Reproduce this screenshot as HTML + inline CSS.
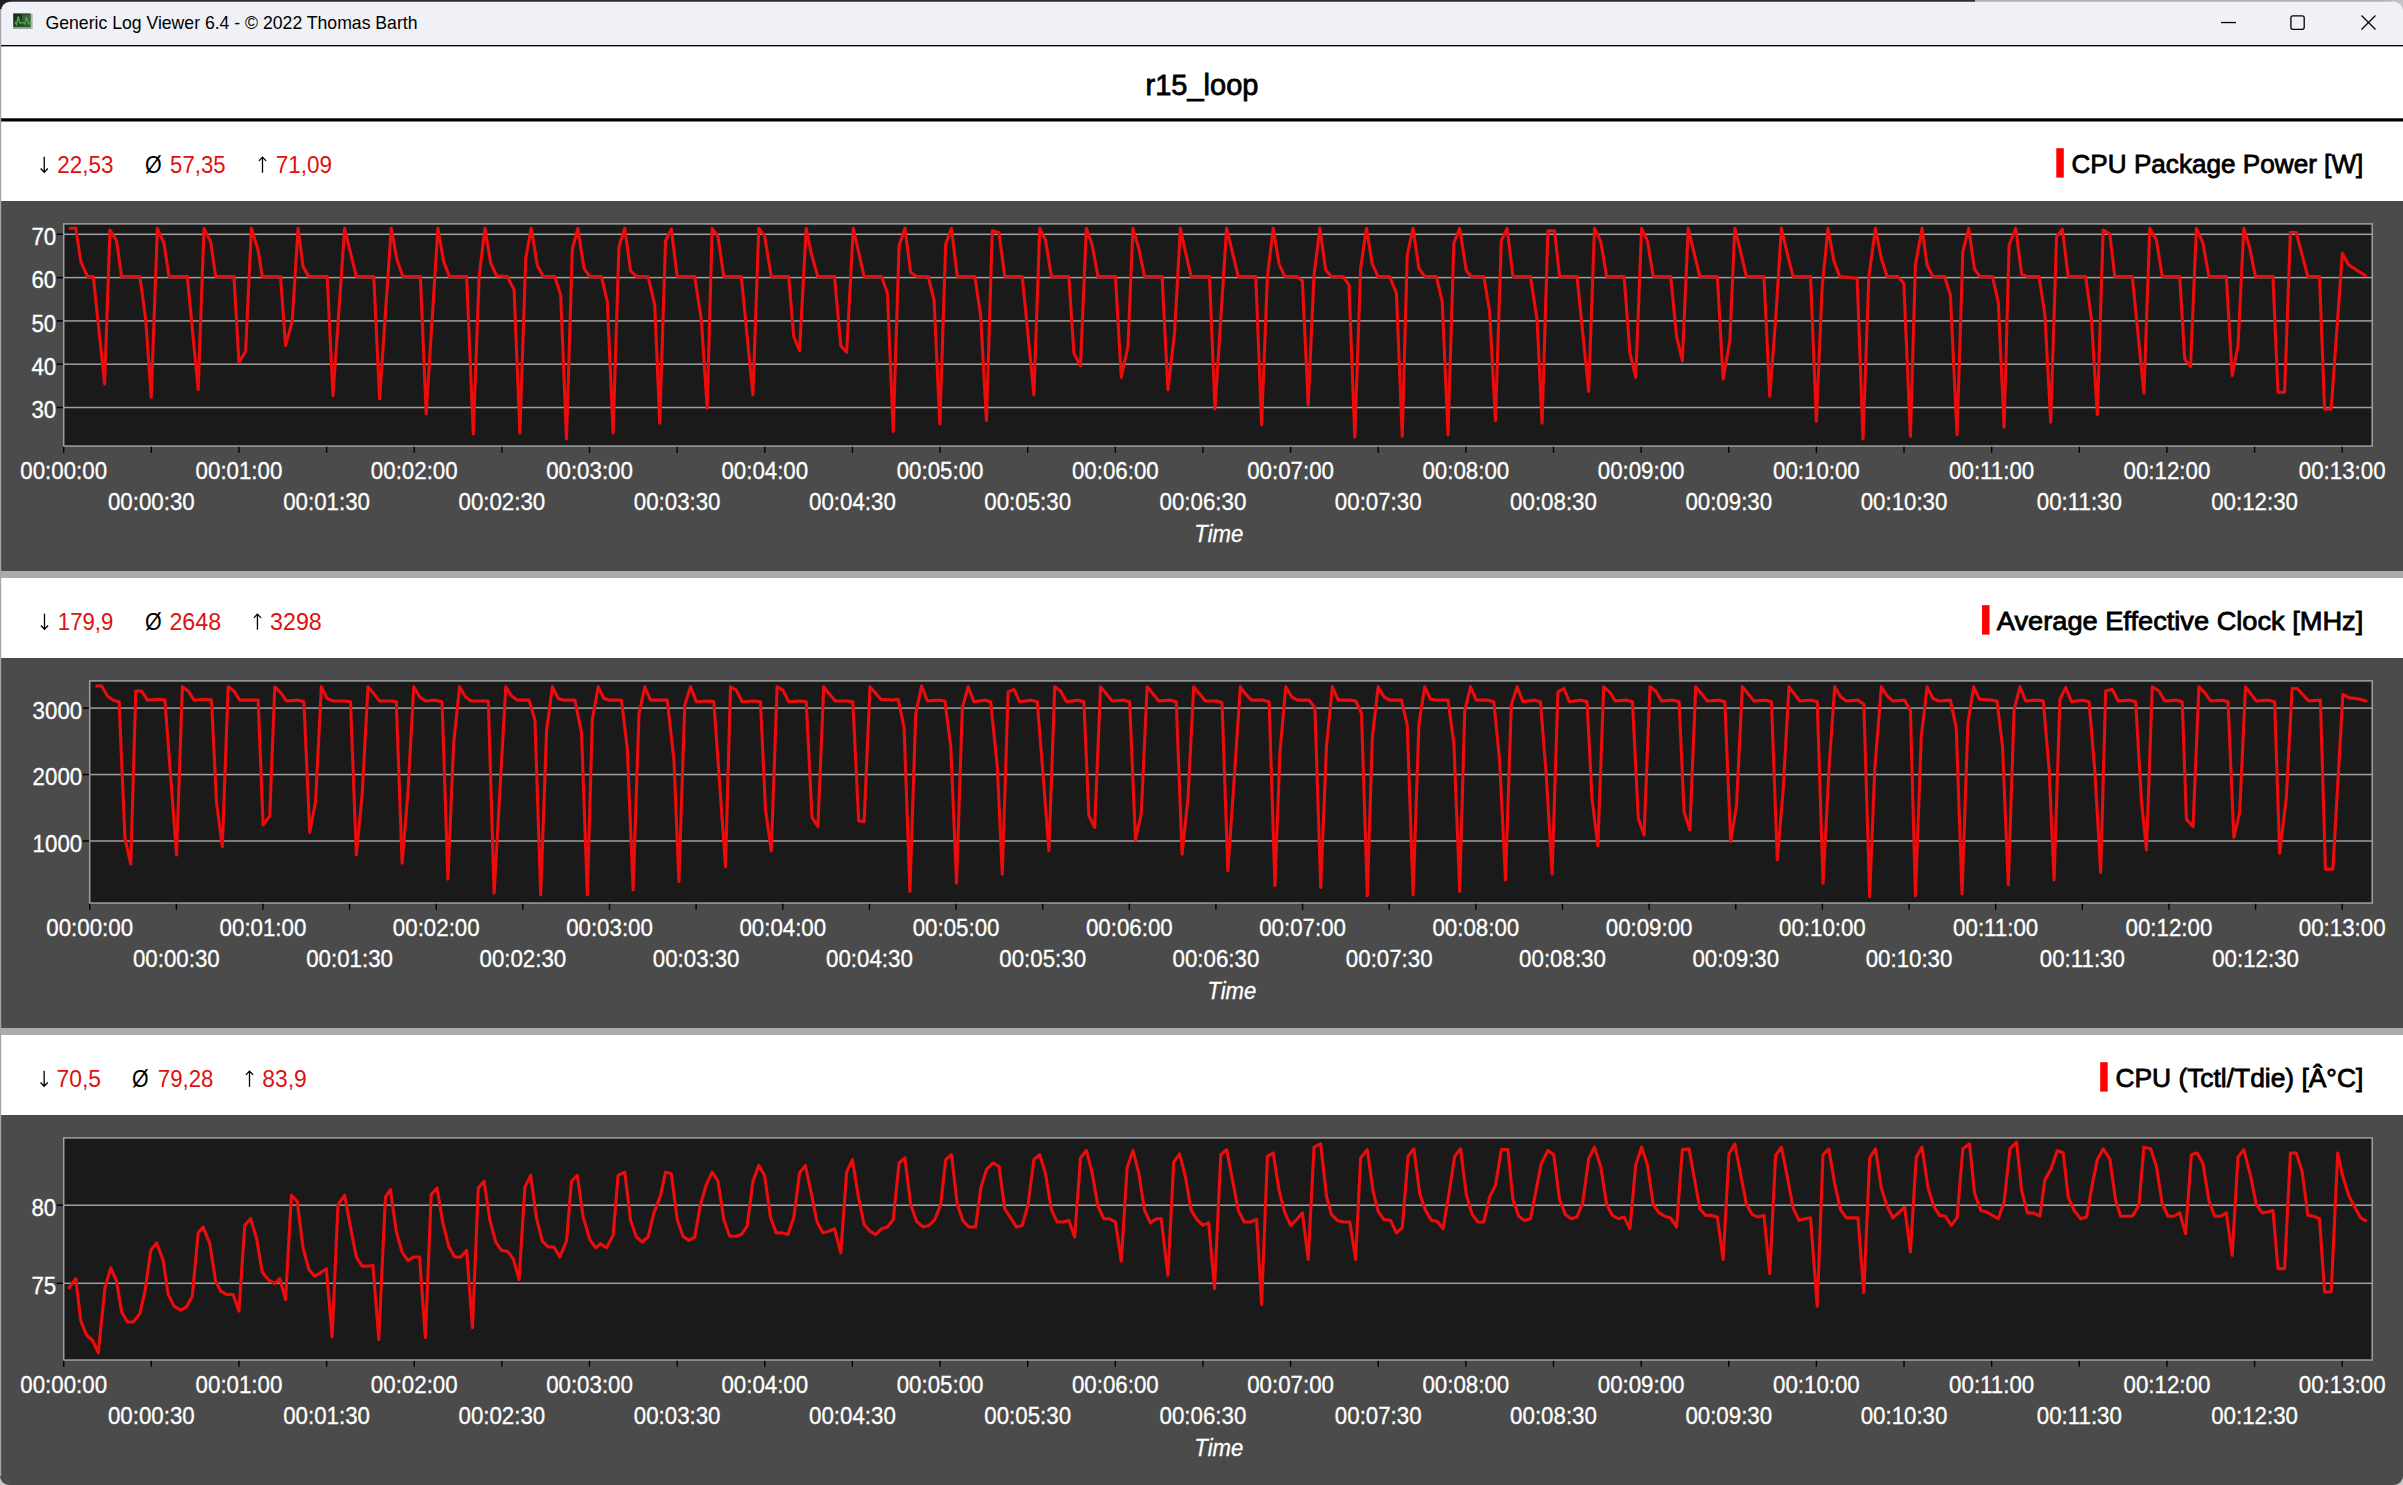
<!DOCTYPE html><html><head><meta charset="utf-8"><style>
html,body{margin:0;padding:0;background:#fff;}
svg{display:block;font-family:"Liberation Sans", sans-serif;}
.ax{font-size:22.3px;fill:#fff;stroke:#fff;stroke-width:0.3px;}
.st{font-size:22.5px;}
.lg{font-size:26px;fill:#000;stroke:#000;stroke-width:0.8px;}
</style></head><body>
<svg width="2403" height="1485" viewBox="0 0 2403 1485">
<rect x="0" y="0" width="2403" height="1485" fill="#fff"/>
<rect x="0" y="0" width="1975" height="2" fill="#2c2c2c"/>
<rect x="1975" y="0" width="428" height="2" fill="#b4b4b6"/>
<rect x="0" y="0" width="12" height="12" fill="#1e1e1e"/>
<rect x="2391" y="0" width="12" height="12" fill="#c4c4c4"/>
<rect x="1" y="1.8" width="2402" height="60" rx="9" fill="#eff1f6"/>
<rect x="1" y="30" width="2402" height="15" fill="#eff1f6"/>
<rect x="0" y="45" width="2403" height="1.6" fill="#000"/>
<rect x="0" y="46.6" width="2403" height="71.6" fill="#fff"/>
<defs><linearGradient id="ig" x1="0" y1="0" x2="1" y2="1"><stop offset="0" stop-color="#142015"/><stop offset="0.5" stop-color="#1f4a22"/><stop offset="1" stop-color="#2a5e2e"/></linearGradient><filter id="bl" x="-20%" y="-20%" width="140%" height="140%"><feGaussianBlur stdDeviation="0.5"/></filter></defs>
<g filter="url(#bl)"><rect x="13.2" y="13.4" width="17.6" height="14" fill="url(#ig)"/><rect x="22" y="14.5" width="8" height="6" fill="#6a7a6a" opacity="0.45"/><rect x="13.2" y="27" width="17.8" height="2" fill="#9a9c9e"/><rect x="30.8" y="14" width="2" height="15" fill="#b8b8bc"/><polyline points="15,22 16.5,24.5 18.3,16.5 19.8,23 23,22.5 25,24 26.5,17 28.5,24 30,22" fill="none" stroke="#4fa653" stroke-width="1.4"/></g>
<text x="45.5" y="29" font-size="18.4px" fill="#000" textLength="372" lengthAdjust="spacingAndGlyphs">Generic Log Viewer 6.4 - © 2022 Thomas Barth</text>
<rect x="2221" y="21.9" width="15" height="1.3" fill="#000"/>
<rect x="2290.9" y="15.8" width="13.3" height="13.5" rx="2" fill="none" stroke="#000" stroke-width="1.3"/>
<path d="M2361.5,15.5 L2375.5,29.5 M2375.5,15.5 L2361.5,29.5" stroke="#000" stroke-width="1.3" fill="none"/>
<text x="1202" y="95" text-anchor="middle" font-size="29px" fill="#000" stroke="#000" stroke-width="0.8">r15_loop</text>
<rect x="0" y="118.3" width="2403" height="3.2" fill="#000"/>
<rect x="0" y="571" width="2403" height="7" fill="#ababab"/>
<rect x="0" y="1028" width="2403" height="7" fill="#ababab"/>
<rect x="0" y="201" width="2403" height="370" fill="#4b4b4b"/>
<rect x="63.70" y="223.90" width="2308.50" height="222.15" fill="#1a1a1a"/>
<rect x="63" y="233.55" width="2309.20" height="1.5" fill="#9f9f9f"/>
<rect x="56.70" y="233.55" width="6.3" height="1.5" fill="#000"/>
<text transform="translate(56.20,245.10) scale(1,1.09)" class="ax" text-anchor="end">70</text>
<rect x="63" y="276.85" width="2309.20" height="1.5" fill="#9f9f9f"/>
<rect x="56.70" y="276.85" width="6.3" height="1.5" fill="#000"/>
<text transform="translate(56.20,288.40) scale(1,1.09)" class="ax" text-anchor="end">60</text>
<rect x="63" y="320.15" width="2309.20" height="1.5" fill="#9f9f9f"/>
<rect x="56.70" y="320.15" width="6.3" height="1.5" fill="#000"/>
<text transform="translate(56.20,331.70) scale(1,1.09)" class="ax" text-anchor="end">50</text>
<rect x="63" y="363.45" width="2309.20" height="1.5" fill="#9f9f9f"/>
<rect x="56.70" y="363.45" width="6.3" height="1.5" fill="#000"/>
<text transform="translate(56.20,375.00) scale(1,1.09)" class="ax" text-anchor="end">40</text>
<rect x="63" y="406.75" width="2309.20" height="1.5" fill="#9f9f9f"/>
<rect x="56.70" y="406.75" width="6.3" height="1.5" fill="#000"/>
<text transform="translate(56.20,418.30) scale(1,1.09)" class="ax" text-anchor="end">30</text>
<rect x="63.70" y="223.90" width="2308.50" height="222.15" fill="none" stroke="#9f9f9f" stroke-width="1.5"/>
<rect x="63.00" y="446.80" width="1.4" height="6" fill="#000"/>
<text transform="translate(63.70,478.85) scale(1,1.09)" class="ax" text-anchor="middle">00:00:00</text>
<rect x="150.63" y="446.80" width="1.4" height="6" fill="#000"/>
<text transform="translate(151.33,509.55) scale(1,1.09)" class="ax" text-anchor="middle">00:00:30</text>
<rect x="238.27" y="446.80" width="1.4" height="6" fill="#000"/>
<text transform="translate(238.97,478.85) scale(1,1.09)" class="ax" text-anchor="middle">00:01:00</text>
<rect x="325.90" y="446.80" width="1.4" height="6" fill="#000"/>
<text transform="translate(326.60,509.55) scale(1,1.09)" class="ax" text-anchor="middle">00:01:30</text>
<rect x="413.54" y="446.80" width="1.4" height="6" fill="#000"/>
<text transform="translate(414.24,478.85) scale(1,1.09)" class="ax" text-anchor="middle">00:02:00</text>
<rect x="501.17" y="446.80" width="1.4" height="6" fill="#000"/>
<text transform="translate(501.87,509.55) scale(1,1.09)" class="ax" text-anchor="middle">00:02:30</text>
<rect x="588.81" y="446.80" width="1.4" height="6" fill="#000"/>
<text transform="translate(589.51,478.85) scale(1,1.09)" class="ax" text-anchor="middle">00:03:00</text>
<rect x="676.44" y="446.80" width="1.4" height="6" fill="#000"/>
<text transform="translate(677.14,509.55) scale(1,1.09)" class="ax" text-anchor="middle">00:03:30</text>
<rect x="764.08" y="446.80" width="1.4" height="6" fill="#000"/>
<text transform="translate(764.78,478.85) scale(1,1.09)" class="ax" text-anchor="middle">00:04:00</text>
<rect x="851.71" y="446.80" width="1.4" height="6" fill="#000"/>
<text transform="translate(852.41,509.55) scale(1,1.09)" class="ax" text-anchor="middle">00:04:30</text>
<rect x="939.35" y="446.80" width="1.4" height="6" fill="#000"/>
<text transform="translate(940.05,478.85) scale(1,1.09)" class="ax" text-anchor="middle">00:05:00</text>
<rect x="1026.98" y="446.80" width="1.4" height="6" fill="#000"/>
<text transform="translate(1027.68,509.55) scale(1,1.09)" class="ax" text-anchor="middle">00:05:30</text>
<rect x="1114.62" y="446.80" width="1.4" height="6" fill="#000"/>
<text transform="translate(1115.32,478.85) scale(1,1.09)" class="ax" text-anchor="middle">00:06:00</text>
<rect x="1202.25" y="446.80" width="1.4" height="6" fill="#000"/>
<text transform="translate(1202.95,509.55) scale(1,1.09)" class="ax" text-anchor="middle">00:06:30</text>
<rect x="1289.88" y="446.80" width="1.4" height="6" fill="#000"/>
<text transform="translate(1290.58,478.85) scale(1,1.09)" class="ax" text-anchor="middle">00:07:00</text>
<rect x="1377.52" y="446.80" width="1.4" height="6" fill="#000"/>
<text transform="translate(1378.22,509.55) scale(1,1.09)" class="ax" text-anchor="middle">00:07:30</text>
<rect x="1465.15" y="446.80" width="1.4" height="6" fill="#000"/>
<text transform="translate(1465.85,478.85) scale(1,1.09)" class="ax" text-anchor="middle">00:08:00</text>
<rect x="1552.79" y="446.80" width="1.4" height="6" fill="#000"/>
<text transform="translate(1553.49,509.55) scale(1,1.09)" class="ax" text-anchor="middle">00:08:30</text>
<rect x="1640.42" y="446.80" width="1.4" height="6" fill="#000"/>
<text transform="translate(1641.12,478.85) scale(1,1.09)" class="ax" text-anchor="middle">00:09:00</text>
<rect x="1728.06" y="446.80" width="1.4" height="6" fill="#000"/>
<text transform="translate(1728.76,509.55) scale(1,1.09)" class="ax" text-anchor="middle">00:09:30</text>
<rect x="1815.69" y="446.80" width="1.4" height="6" fill="#000"/>
<text transform="translate(1816.39,478.85) scale(1,1.09)" class="ax" text-anchor="middle">00:10:00</text>
<rect x="1903.33" y="446.80" width="1.4" height="6" fill="#000"/>
<text transform="translate(1904.03,509.55) scale(1,1.09)" class="ax" text-anchor="middle">00:10:30</text>
<rect x="1990.96" y="446.80" width="1.4" height="6" fill="#000"/>
<text transform="translate(1991.66,478.85) scale(1,1.09)" class="ax" text-anchor="middle">00:11:00</text>
<rect x="2078.60" y="446.80" width="1.4" height="6" fill="#000"/>
<text transform="translate(2079.30,509.55) scale(1,1.09)" class="ax" text-anchor="middle">00:11:30</text>
<rect x="2166.23" y="446.80" width="1.4" height="6" fill="#000"/>
<text transform="translate(2166.93,478.85) scale(1,1.09)" class="ax" text-anchor="middle">00:12:00</text>
<rect x="2253.87" y="446.80" width="1.4" height="6" fill="#000"/>
<text transform="translate(2254.57,509.55) scale(1,1.09)" class="ax" text-anchor="middle">00:12:30</text>
<rect x="2341.50" y="446.80" width="1.4" height="6" fill="#000"/>
<text transform="translate(2342.20,478.85) scale(1,1.09)" class="ax" text-anchor="middle">00:13:00</text>
<text transform="translate(1218.85,541.65) scale(1,1.06)" class="ax" text-anchor="middle" textLength="49.00" lengthAdjust="spacingAndGlyphs" font-style="italic">Time</text>
<clipPath id="c121"><rect x="64.45" y="224.65" width="2307.00" height="220.65"/></clipPath>
<polyline points="69.99,228.32 75.81,228.32 80.81,261.61 87.47,276.60 93.29,276.60 104.61,383.96 109.94,229.99 116.60,240.81 121.59,276.60 139.90,276.60 145.73,319.88 151.22,397.28 157.38,228.32 164.04,243.30 169.03,276.60 187.34,276.60 198.16,389.79 203.99,228.32 210.65,241.64 215.64,276.60 233.95,276.60 238.94,362.32 245.60,351.50 251.43,228.32 258.09,249.96 262.25,276.60 280.56,276.60 285.55,345.68 292.21,321.54 298.04,228.32 303.03,266.61 308.86,276.60 327.17,276.60 332.99,395.61 344.64,228.32 356.30,276.60 373.77,276.60 379.60,398.94 391.25,228.32 397.08,259.95 402.90,276.60 420.38,276.60 426.21,413.92 437.86,228.32 443.69,261.61 449.51,276.60 466.63,276.60 473.29,433.90 479.12,276.60 484.94,228.32 490.77,263.28 496.60,275.76 507.42,276.60 514.07,289.91 519.90,433.07 525.73,258.29 531.22,228.32 537.38,265.78 543.20,276.60 554.86,276.60 560.68,294.91 566.51,438.89 572.33,249.13 577.83,228.32 583.99,268.27 589.81,276.60 601.46,276.60 607.29,301.56 613.12,433.07 618.94,246.63 624.77,228.32 630.60,270.77 636.42,276.60 648.07,276.60 654.73,304.89 659.73,423.08 665.55,240.81 671.38,229.16 677.20,276.60 694.68,276.60 701.34,319.88 707.17,408.10 712.16,228.32 717.99,236.65 723.81,276.60 741.29,276.60 752.94,394.78 758.77,228.32 764.59,235.81 771.25,276.60 788.73,276.60 793.72,336.52 799.55,350.67 806.21,228.32 811.20,253.29 817.86,276.60 834.51,276.60 840.81,345.68 846.63,352.33 853.29,228.32 864.11,276.60 881.59,276.60 887.42,293.24 893.24,431.40 899.07,245.80 904.89,228.32 910.72,272.43 916.55,276.60 928.20,276.60 934.02,299.90 939.85,423.91 945.68,244.14 951.50,228.32 957.33,276.60 974.81,276.60 980.63,314.88 986.46,420.58 992.28,230.82 998.94,232.48 1004.77,276.60 1022.25,276.60 1033.90,394.78 1039.73,228.32 1045.55,239.98 1051.38,276.60 1068.86,276.60 1073.85,353.17 1080.51,365.65 1086.33,228.32 1092.16,244.97 1097.99,276.60 1115.46,276.60 1121.29,377.30 1127.95,346.51 1132.94,228.32 1138.77,248.30 1144.59,276.60 1162.07,276.60 1167.90,389.79 1174.56,333.19 1180.38,228.32 1185.38,251.63 1191.20,276.60 1209.51,276.60 1214.98,408.93 1220.81,318.21 1226.63,228.32 1238.29,276.60 1255.76,276.60 1261.59,424.74 1267.42,276.60 1273.24,228.32 1279.07,264.11 1284.89,276.60 1296.55,276.60 1302.37,280.76 1308.20,404.77 1314.02,274.93 1319.85,228.32 1325.68,269.94 1331.50,276.60 1343.15,276.60 1348.98,284.92 1354.81,437.23 1360.63,268.27 1366.46,228.32 1372.28,264.11 1378.11,276.60 1389.76,276.60 1396.42,293.24 1402.25,436.40 1407.24,254.96 1413.07,228.32 1418.89,268.27 1424.72,276.60 1436.37,276.60 1442.20,301.56 1448.02,434.73 1453.85,243.30 1459.68,228.32 1466.33,270.77 1471.33,276.60 1483.81,276.60 1489.64,311.55 1495.46,420.58 1501.29,240.81 1507.12,228.32 1512.94,276.60 1530.42,276.60 1537.08,319.88 1542.07,423.08 1547.90,230.82 1554.56,230.82 1559.55,276.60 1577.03,276.60 1588.68,391.45 1594.51,228.32 1600.81,241.64 1606.63,276.60 1624.11,276.60 1629.94,353.17 1635.76,377.30 1641.59,228.32 1647.42,240.81 1653.24,276.60 1670.72,276.60 1676.55,336.52 1682.37,360.66 1688.20,228.32 1699.85,276.60 1717.33,276.60 1723.15,378.97 1729.81,341.51 1734.81,228.32 1740.63,251.63 1746.46,276.60 1763.94,276.60 1769.76,396.45 1775.59,319.88 1781.41,228.32 1787.24,253.29 1793.07,276.60 1810.55,276.60 1816.37,421.41 1822.20,286.58 1828.02,228.32 1833.85,260.78 1839.68,276.60 1857.15,278.26 1862.98,438.89 1868.81,277.43 1875.46,228.32 1881.29,258.29 1887.12,276.60 1897.94,276.60 1903.76,283.25 1910.42,436.40 1915.41,264.94 1922.07,228.32 1927.07,264.94 1932.89,276.60 1944.54,276.60 1950.37,294.91 1957.03,434.73 1962.85,251.63 1968.68,228.32 1974.51,269.11 1979.98,276.60 1992.46,276.60 1998.29,302.40 2004.11,427.24 2009.11,244.97 2015.76,228.32 2021.59,274.10 2027.42,276.60 2039.07,276.60 2044.89,314.88 2050.72,422.25 2056.55,236.65 2062.37,229.16 2068.20,276.60 2085.68,276.60 2091.50,319.88 2097.33,414.76 2103.15,229.99 2109.81,234.15 2114.81,276.60 2132.28,276.60 2143.94,393.12 2149.76,228.32 2156.42,239.98 2162.25,276.60 2179.73,276.60 2184.72,358.99 2190.55,366.48 2196.37,228.32 2203.03,243.30 2208.86,276.60 2226.33,276.60 2232.16,375.64 2237.99,346.51 2243.81,228.32 2249.64,247.47 2255.46,276.60 2272.94,276.60 2277.94,392.28 2284.59,392.28 2290.42,232.48 2296.25,232.48 2307.90,276.60 2319.55,276.60 2324.54,408.93 2331.20,408.93 2342.36,253.30 2348.56,264.92 2365.60,275.76" fill="none" stroke="#ec0c0c" stroke-width="3.1" stroke-linejoin="round" stroke-linecap="round" clip-path="url(#c121)"/>
<path d="M44.25,156.70 L44.25,171.70 M40.65,168.50 L44.25,172.30 L47.85,168.50" fill="none" stroke="#000" stroke-width="1.3"/>
<text transform="translate(57.20,172.70) scale(1,1.1)" class="st" textLength="56.20" lengthAdjust="spacingAndGlyphs" fill="#dd1010">22,53</text>
<text transform="translate(144.90,172.70) scale(1,1.1)" class="st" textLength="16.70" lengthAdjust="spacingAndGlyphs" fill="#000">Ø</text>
<text transform="translate(170.10,172.70) scale(1,1.1)" class="st" textLength="55.50" lengthAdjust="spacingAndGlyphs" fill="#dd1010">57,35</text>
<path d="M262.50,172.70 L262.50,157.70 M258.90,160.90 L262.50,157.10 L266.10,160.90" fill="none" stroke="#000" stroke-width="1.3"/>
<text transform="translate(275.80,172.70) scale(1,1.1)" class="st" textLength="56.30" lengthAdjust="spacingAndGlyphs" fill="#dd1010">71,09</text>
<rect x="2056.30" y="148.20" width="7.5" height="29.4" fill="#ff0000"/>
<text x="2071.50" y="172.90" class="lg" textLength="291.80" lengthAdjust="spacingAndGlyphs">CPU Package Power [W]</text>
<rect x="0" y="658" width="2403" height="370" fill="#4b4b4b"/>
<rect x="89.70" y="680.90" width="2282.50" height="222.15" fill="#1a1a1a"/>
<rect x="89" y="707.35" width="2283.20" height="1.5" fill="#9f9f9f"/>
<rect x="82.70" y="707.35" width="6.3" height="1.5" fill="#000"/>
<text transform="translate(82.20,718.90) scale(1,1.09)" class="ax" text-anchor="end">3000</text>
<rect x="89" y="773.80" width="2283.20" height="1.5" fill="#9f9f9f"/>
<rect x="82.70" y="773.80" width="6.3" height="1.5" fill="#000"/>
<text transform="translate(82.20,785.35) scale(1,1.09)" class="ax" text-anchor="end">2000</text>
<rect x="89" y="840.25" width="2283.20" height="1.5" fill="#9f9f9f"/>
<rect x="82.70" y="840.25" width="6.3" height="1.5" fill="#000"/>
<text transform="translate(82.20,851.80) scale(1,1.09)" class="ax" text-anchor="end">1000</text>
<rect x="89.70" y="680.90" width="2282.50" height="222.15" fill="none" stroke="#9f9f9f" stroke-width="1.5"/>
<rect x="89.00" y="903.80" width="1.4" height="6" fill="#000"/>
<text transform="translate(89.70,935.85) scale(1,1.09)" class="ax" text-anchor="middle">00:00:00</text>
<rect x="175.63" y="903.80" width="1.4" height="6" fill="#000"/>
<text transform="translate(176.33,966.55) scale(1,1.09)" class="ax" text-anchor="middle">00:00:30</text>
<rect x="262.27" y="903.80" width="1.4" height="6" fill="#000"/>
<text transform="translate(262.97,935.85) scale(1,1.09)" class="ax" text-anchor="middle">00:01:00</text>
<rect x="348.90" y="903.80" width="1.4" height="6" fill="#000"/>
<text transform="translate(349.60,966.55) scale(1,1.09)" class="ax" text-anchor="middle">00:01:30</text>
<rect x="435.54" y="903.80" width="1.4" height="6" fill="#000"/>
<text transform="translate(436.24,935.85) scale(1,1.09)" class="ax" text-anchor="middle">00:02:00</text>
<rect x="522.17" y="903.80" width="1.4" height="6" fill="#000"/>
<text transform="translate(522.87,966.55) scale(1,1.09)" class="ax" text-anchor="middle">00:02:30</text>
<rect x="608.81" y="903.80" width="1.4" height="6" fill="#000"/>
<text transform="translate(609.51,935.85) scale(1,1.09)" class="ax" text-anchor="middle">00:03:00</text>
<rect x="695.44" y="903.80" width="1.4" height="6" fill="#000"/>
<text transform="translate(696.14,966.55) scale(1,1.09)" class="ax" text-anchor="middle">00:03:30</text>
<rect x="782.08" y="903.80" width="1.4" height="6" fill="#000"/>
<text transform="translate(782.78,935.85) scale(1,1.09)" class="ax" text-anchor="middle">00:04:00</text>
<rect x="868.71" y="903.80" width="1.4" height="6" fill="#000"/>
<text transform="translate(869.41,966.55) scale(1,1.09)" class="ax" text-anchor="middle">00:04:30</text>
<rect x="955.35" y="903.80" width="1.4" height="6" fill="#000"/>
<text transform="translate(956.05,935.85) scale(1,1.09)" class="ax" text-anchor="middle">00:05:00</text>
<rect x="1041.98" y="903.80" width="1.4" height="6" fill="#000"/>
<text transform="translate(1042.68,966.55) scale(1,1.09)" class="ax" text-anchor="middle">00:05:30</text>
<rect x="1128.62" y="903.80" width="1.4" height="6" fill="#000"/>
<text transform="translate(1129.32,935.85) scale(1,1.09)" class="ax" text-anchor="middle">00:06:00</text>
<rect x="1215.25" y="903.80" width="1.4" height="6" fill="#000"/>
<text transform="translate(1215.95,966.55) scale(1,1.09)" class="ax" text-anchor="middle">00:06:30</text>
<rect x="1301.88" y="903.80" width="1.4" height="6" fill="#000"/>
<text transform="translate(1302.58,935.85) scale(1,1.09)" class="ax" text-anchor="middle">00:07:00</text>
<rect x="1388.52" y="903.80" width="1.4" height="6" fill="#000"/>
<text transform="translate(1389.22,966.55) scale(1,1.09)" class="ax" text-anchor="middle">00:07:30</text>
<rect x="1475.15" y="903.80" width="1.4" height="6" fill="#000"/>
<text transform="translate(1475.85,935.85) scale(1,1.09)" class="ax" text-anchor="middle">00:08:00</text>
<rect x="1561.79" y="903.80" width="1.4" height="6" fill="#000"/>
<text transform="translate(1562.49,966.55) scale(1,1.09)" class="ax" text-anchor="middle">00:08:30</text>
<rect x="1648.42" y="903.80" width="1.4" height="6" fill="#000"/>
<text transform="translate(1649.12,935.85) scale(1,1.09)" class="ax" text-anchor="middle">00:09:00</text>
<rect x="1735.06" y="903.80" width="1.4" height="6" fill="#000"/>
<text transform="translate(1735.76,966.55) scale(1,1.09)" class="ax" text-anchor="middle">00:09:30</text>
<rect x="1821.69" y="903.80" width="1.4" height="6" fill="#000"/>
<text transform="translate(1822.39,935.85) scale(1,1.09)" class="ax" text-anchor="middle">00:10:00</text>
<rect x="1908.33" y="903.80" width="1.4" height="6" fill="#000"/>
<text transform="translate(1909.03,966.55) scale(1,1.09)" class="ax" text-anchor="middle">00:10:30</text>
<rect x="1994.96" y="903.80" width="1.4" height="6" fill="#000"/>
<text transform="translate(1995.66,935.85) scale(1,1.09)" class="ax" text-anchor="middle">00:11:00</text>
<rect x="2081.60" y="903.80" width="1.4" height="6" fill="#000"/>
<text transform="translate(2082.30,966.55) scale(1,1.09)" class="ax" text-anchor="middle">00:11:30</text>
<rect x="2168.23" y="903.80" width="1.4" height="6" fill="#000"/>
<text transform="translate(2168.93,935.85) scale(1,1.09)" class="ax" text-anchor="middle">00:12:00</text>
<rect x="2254.87" y="903.80" width="1.4" height="6" fill="#000"/>
<text transform="translate(2255.57,966.55) scale(1,1.09)" class="ax" text-anchor="middle">00:12:30</text>
<rect x="2341.50" y="903.80" width="1.4" height="6" fill="#000"/>
<text transform="translate(2342.20,935.85) scale(1,1.09)" class="ax" text-anchor="middle">00:13:00</text>
<text transform="translate(1231.85,998.65) scale(1,1.06)" class="ax" text-anchor="middle" textLength="49.00" lengthAdjust="spacingAndGlyphs" font-style="italic">Time</text>
<clipPath id="c578"><rect x="90.45" y="681.65" width="2281.00" height="220.65"/></clipPath>
<polyline points="96.65,685.99 101.65,685.99 107.47,695.98 113.30,700.14 119.12,701.80 124.95,838.30 130.78,864.10 135.77,690.98 141.60,690.98 147.42,700.14 159.07,699.30 164.90,700.14 170.73,777.54 176.55,854.94 182.38,686.82 188.20,690.98 194.03,700.14 205.68,699.30 211.51,700.14 216.50,802.51 222.33,846.62 228.15,686.82 233.98,690.98 239.81,700.14 252.29,700.14 258.12,700.14 263.11,824.98 269.77,815.83 274.76,686.82 280.59,692.65 286.41,700.97 298.07,700.14 303.89,701.80 309.72,832.47 315.55,801.68 321.37,686.82 327.20,698.47 333.02,700.97 344.68,700.97 350.50,701.80 356.33,854.94 362.15,795.02 367.98,686.82 372.97,692.65 379.63,700.97 391.28,700.97 396.28,701.80 402.10,863.27 407.93,792.52 413.76,686.82 419.58,696.81 425.41,700.97 435.40,700.14 442.05,701.80 447.88,879.08 453.71,742.58 459.53,686.82 465.36,696.81 471.18,700.97 488.30,700.97 494.13,893.23 505.78,686.82 511.61,695.98 517.43,700.14 529.09,700.14 534.91,720.11 540.74,894.89 546.56,730.93 552.39,686.82 558.22,698.47 564.04,700.14 574.86,700.14 581.52,732.60 587.35,894.89 592.34,719.28 598.17,686.82 603.99,698.47 609.82,700.14 621.47,700.14 627.30,748.41 633.12,889.90 638.95,714.29 644.78,686.82 650.60,700.14 656.43,700.14 667.25,700.14 673.91,759.23 678.90,881.58 684.73,705.13 690.55,686.82 696.38,701.80 708.03,700.97 713.86,701.80 725.51,866.60 730.50,686.82 736.33,690.15 742.15,701.80 753.81,700.97 760.46,701.80 765.46,809.17 771.28,850.78 777.11,686.82 782.94,690.15 788.76,701.80 800.41,700.97 806.24,701.80 812.07,817.49 817.89,826.65 823.72,686.82 829.54,694.31 835.37,700.97 847.02,700.97 852.85,701.80 858.67,820.82 864.14,821.65 869.97,686.82 880.79,699.30 892.44,700.14 898.27,699.30 904.09,727.60 909.92,891.56 915.74,713.45 921.57,685.99 927.40,700.97 939.05,700.14 944.88,700.97 950.70,745.91 956.53,883.24 962.35,707.63 968.18,686.82 974.01,701.80 984.83,700.14 990.65,701.80 997.31,766.72 1002.30,874.09 1008.13,691.81 1013.96,689.32 1019.78,701.80 1031.43,700.14 1037.26,701.80 1043.09,775.04 1048.91,850.78 1054.74,686.82 1060.56,690.98 1066.39,701.80 1078.04,700.14 1083.87,701.80 1088.86,815.83 1094.69,827.48 1100.51,686.82 1112.17,700.97 1123.82,700.14 1129.64,701.80 1135.47,839.96 1141.30,813.33 1147.12,686.82 1158.77,700.97 1170.43,700.14 1176.25,701.80 1182.08,854.11 1187.90,799.18 1193.73,686.82 1205.38,700.97 1217.03,700.97 1222.03,702.63 1227.85,870.76 1234.51,774.21 1240.34,686.82 1245.81,694.31 1251.63,700.14 1263.29,700.14 1269.11,701.80 1274.94,885.74 1279.93,752.57 1285.76,686.82 1291.58,696.81 1297.41,700.14 1309.06,700.14 1314.89,707.63 1320.71,887.40 1326.54,745.91 1332.37,686.82 1338.19,700.14 1349.84,700.14 1355.67,700.97 1361.50,713.45 1367.32,895.73 1372.32,737.59 1378.14,686.82 1383.97,696.81 1389.79,700.14 1401.45,700.14 1407.27,725.11 1413.10,894.89 1418.92,724.27 1424.75,686.82 1430.58,699.30 1436.40,700.14 1448.05,700.14 1453.88,743.42 1459.71,891.56 1464.70,710.96 1470.53,686.82 1476.35,700.14 1488.00,700.14 1493.83,701.80 1499.66,760.89 1505.48,879.91 1511.31,705.13 1517.13,686.82 1522.96,701.80 1534.61,700.14 1540.44,701.80 1546.27,775.04 1552.09,874.09 1557.92,691.81 1563.74,688.48 1569.57,701.80 1581.22,700.14 1587.05,701.80 1592.04,799.18 1597.87,845.79 1603.69,686.82 1609.52,691.81 1615.35,700.97 1626.64,700.14 1632.47,701.80 1638.29,818.32 1644.12,834.97 1649.94,686.82 1655.77,690.98 1661.60,700.97 1673.25,700.14 1679.07,701.80 1684.07,811.66 1689.89,829.97 1695.72,686.82 1707.37,700.97 1719.02,700.14 1724.85,701.80 1730.68,841.63 1736.50,805.84 1742.33,686.82 1753.98,700.97 1765.63,700.14 1771.46,701.80 1777.28,859.94 1783.11,790.86 1788.94,686.82 1799.76,700.97 1811.41,700.14 1817.23,701.80 1823.06,883.24 1828.89,770.88 1834.71,686.82 1840.54,696.81 1846.36,700.97 1858.02,700.14 1863.84,704.30 1869.67,896.56 1874.66,770.88 1881.32,686.82 1887.15,695.98 1892.97,700.97 1904.63,700.14 1910.45,710.96 1915.45,895.73 1921.27,736.76 1927.10,686.82 1932.92,698.47 1938.75,700.97 1950.40,700.14 1956.23,727.60 1962.05,894.06 1967.88,723.44 1973.71,686.82 1979.53,699.30 1991.18,700.14 1997.01,700.97 2002.48,745.91 2008.30,884.91 2014.13,709.29 2019.96,686.82 2025.78,700.97 2037.43,700.14 2043.26,700.97 2049.09,769.22 2054.08,879.91 2059.91,699.30 2065.73,687.65 2071.56,701.80 2083.21,700.14 2089.04,701.80 2094.86,771.71 2100.69,872.42 2105.68,690.98 2112.34,689.32 2118.17,700.97 2129.82,700.14 2135.65,701.80 2141.47,800.84 2146.46,849.95 2152.29,686.82 2158.95,690.98 2164.78,700.97 2176.43,700.14 2182.25,701.80 2186.41,819.15 2193.07,826.65 2198.90,686.82 2204.73,692.65 2210.55,700.97 2222.20,700.14 2228.03,701.80 2233.86,837.46 2239.68,812.50 2245.51,686.82 2256.33,700.97 2267.98,700.14 2274.64,701.80 2279.63,853.28 2286.29,798.35 2292.12,688.48 2297.11,688.48 2308.76,700.97 2320.41,700.14 2325.41,869.09 2332.90,869.09 2342.89,694.31 2348.71,697.64 2360.36,699.30 2366.19,700.97" fill="none" stroke="#ec0c0c" stroke-width="3.1" stroke-linejoin="round" stroke-linecap="round" clip-path="url(#c578)"/>
<path d="M44.50,613.70 L44.50,628.70 M40.90,625.50 L44.50,629.30 L48.10,625.50" fill="none" stroke="#000" stroke-width="1.3"/>
<text transform="translate(57.80,629.70) scale(1,1.1)" class="st" textLength="55.60" lengthAdjust="spacingAndGlyphs" fill="#dd1010">179,9</text>
<text transform="translate(144.90,629.70) scale(1,1.1)" class="st" textLength="16.70" lengthAdjust="spacingAndGlyphs" fill="#000">Ø</text>
<text transform="translate(169.40,629.70) scale(1,1.1)" class="st" textLength="51.70" lengthAdjust="spacingAndGlyphs" fill="#dd1010">2648</text>
<path d="M257.45,629.70 L257.45,614.70 M253.85,617.90 L257.45,614.10 L261.05,617.90" fill="none" stroke="#000" stroke-width="1.3"/>
<text transform="translate(270.10,629.70) scale(1,1.1)" class="st" textLength="51.70" lengthAdjust="spacingAndGlyphs" fill="#dd1010">3298</text>
<rect x="1982.00" y="605.20" width="7.5" height="29.4" fill="#ff0000"/>
<text x="1996.80" y="629.90" class="lg" textLength="366.50" lengthAdjust="spacingAndGlyphs">Average Effective Clock [MHz]</text>
<rect x="0" y="1115" width="2403" height="370" fill="#4b4b4b"/>
<rect x="63.70" y="1137.90" width="2308.50" height="222.15" fill="#1a1a1a"/>
<rect x="63" y="1204.45" width="2309.20" height="1.5" fill="#9f9f9f"/>
<rect x="56.70" y="1204.45" width="6.3" height="1.5" fill="#000"/>
<text transform="translate(56.20,1216.00) scale(1,1.09)" class="ax" text-anchor="end">80</text>
<rect x="63" y="1282.55" width="2309.20" height="1.5" fill="#9f9f9f"/>
<rect x="56.70" y="1282.55" width="6.3" height="1.5" fill="#000"/>
<text transform="translate(56.20,1294.10) scale(1,1.09)" class="ax" text-anchor="end">75</text>
<rect x="63.70" y="1137.90" width="2308.50" height="222.15" fill="none" stroke="#9f9f9f" stroke-width="1.5"/>
<rect x="63.00" y="1360.80" width="1.4" height="6" fill="#000"/>
<text transform="translate(63.70,1392.85) scale(1,1.09)" class="ax" text-anchor="middle">00:00:00</text>
<rect x="150.63" y="1360.80" width="1.4" height="6" fill="#000"/>
<text transform="translate(151.33,1423.55) scale(1,1.09)" class="ax" text-anchor="middle">00:00:30</text>
<rect x="238.27" y="1360.80" width="1.4" height="6" fill="#000"/>
<text transform="translate(238.97,1392.85) scale(1,1.09)" class="ax" text-anchor="middle">00:01:00</text>
<rect x="325.90" y="1360.80" width="1.4" height="6" fill="#000"/>
<text transform="translate(326.60,1423.55) scale(1,1.09)" class="ax" text-anchor="middle">00:01:30</text>
<rect x="413.54" y="1360.80" width="1.4" height="6" fill="#000"/>
<text transform="translate(414.24,1392.85) scale(1,1.09)" class="ax" text-anchor="middle">00:02:00</text>
<rect x="501.17" y="1360.80" width="1.4" height="6" fill="#000"/>
<text transform="translate(501.87,1423.55) scale(1,1.09)" class="ax" text-anchor="middle">00:02:30</text>
<rect x="588.81" y="1360.80" width="1.4" height="6" fill="#000"/>
<text transform="translate(589.51,1392.85) scale(1,1.09)" class="ax" text-anchor="middle">00:03:00</text>
<rect x="676.44" y="1360.80" width="1.4" height="6" fill="#000"/>
<text transform="translate(677.14,1423.55) scale(1,1.09)" class="ax" text-anchor="middle">00:03:30</text>
<rect x="764.08" y="1360.80" width="1.4" height="6" fill="#000"/>
<text transform="translate(764.78,1392.85) scale(1,1.09)" class="ax" text-anchor="middle">00:04:00</text>
<rect x="851.71" y="1360.80" width="1.4" height="6" fill="#000"/>
<text transform="translate(852.41,1423.55) scale(1,1.09)" class="ax" text-anchor="middle">00:04:30</text>
<rect x="939.35" y="1360.80" width="1.4" height="6" fill="#000"/>
<text transform="translate(940.05,1392.85) scale(1,1.09)" class="ax" text-anchor="middle">00:05:00</text>
<rect x="1026.98" y="1360.80" width="1.4" height="6" fill="#000"/>
<text transform="translate(1027.68,1423.55) scale(1,1.09)" class="ax" text-anchor="middle">00:05:30</text>
<rect x="1114.62" y="1360.80" width="1.4" height="6" fill="#000"/>
<text transform="translate(1115.32,1392.85) scale(1,1.09)" class="ax" text-anchor="middle">00:06:00</text>
<rect x="1202.25" y="1360.80" width="1.4" height="6" fill="#000"/>
<text transform="translate(1202.95,1423.55) scale(1,1.09)" class="ax" text-anchor="middle">00:06:30</text>
<rect x="1289.88" y="1360.80" width="1.4" height="6" fill="#000"/>
<text transform="translate(1290.58,1392.85) scale(1,1.09)" class="ax" text-anchor="middle">00:07:00</text>
<rect x="1377.52" y="1360.80" width="1.4" height="6" fill="#000"/>
<text transform="translate(1378.22,1423.55) scale(1,1.09)" class="ax" text-anchor="middle">00:07:30</text>
<rect x="1465.15" y="1360.80" width="1.4" height="6" fill="#000"/>
<text transform="translate(1465.85,1392.85) scale(1,1.09)" class="ax" text-anchor="middle">00:08:00</text>
<rect x="1552.79" y="1360.80" width="1.4" height="6" fill="#000"/>
<text transform="translate(1553.49,1423.55) scale(1,1.09)" class="ax" text-anchor="middle">00:08:30</text>
<rect x="1640.42" y="1360.80" width="1.4" height="6" fill="#000"/>
<text transform="translate(1641.12,1392.85) scale(1,1.09)" class="ax" text-anchor="middle">00:09:00</text>
<rect x="1728.06" y="1360.80" width="1.4" height="6" fill="#000"/>
<text transform="translate(1728.76,1423.55) scale(1,1.09)" class="ax" text-anchor="middle">00:09:30</text>
<rect x="1815.69" y="1360.80" width="1.4" height="6" fill="#000"/>
<text transform="translate(1816.39,1392.85) scale(1,1.09)" class="ax" text-anchor="middle">00:10:00</text>
<rect x="1903.33" y="1360.80" width="1.4" height="6" fill="#000"/>
<text transform="translate(1904.03,1423.55) scale(1,1.09)" class="ax" text-anchor="middle">00:10:30</text>
<rect x="1990.96" y="1360.80" width="1.4" height="6" fill="#000"/>
<text transform="translate(1991.66,1392.85) scale(1,1.09)" class="ax" text-anchor="middle">00:11:00</text>
<rect x="2078.60" y="1360.80" width="1.4" height="6" fill="#000"/>
<text transform="translate(2079.30,1423.55) scale(1,1.09)" class="ax" text-anchor="middle">00:11:30</text>
<rect x="2166.23" y="1360.80" width="1.4" height="6" fill="#000"/>
<text transform="translate(2166.93,1392.85) scale(1,1.09)" class="ax" text-anchor="middle">00:12:00</text>
<rect x="2253.87" y="1360.80" width="1.4" height="6" fill="#000"/>
<text transform="translate(2254.57,1423.55) scale(1,1.09)" class="ax" text-anchor="middle">00:12:30</text>
<rect x="2341.50" y="1360.80" width="1.4" height="6" fill="#000"/>
<text transform="translate(2342.20,1392.85) scale(1,1.09)" class="ax" text-anchor="middle">00:13:00</text>
<text transform="translate(1218.85,1455.65) scale(1,1.06)" class="ax" text-anchor="middle" textLength="49.00" lengthAdjust="spacingAndGlyphs" font-style="italic">Time</text>
<clipPath id="c1035"><rect x="64.45" y="1138.65" width="2307.00" height="220.65"/></clipPath>
<polyline points="69.16,1287.81 75.81,1278.65 80.81,1321.10 86.63,1335.25 92.46,1340.24 98.29,1352.73 104.94,1287.81 110.77,1267.83 116.60,1281.15 121.59,1311.94 127.42,1321.93 133.24,1321.93 139.90,1313.61 144.89,1291.97 150.72,1250.35 156.55,1242.86 163.20,1260.34 168.20,1294.46 174.02,1306.12 180.68,1310.28 186.51,1306.95 192.33,1296.13 198.16,1232.88 203.15,1227.05 209.81,1243.69 215.64,1281.15 220.63,1291.14 226.46,1294.46 233.12,1294.46 238.94,1311.11 244.77,1225.38 250.60,1218.73 256.42,1237.87 262.25,1271.99 268.07,1279.48 274.73,1283.65 279.73,1278.65 285.55,1299.46 291.38,1195.42 297.20,1201.25 303.03,1247.86 308.86,1269.50 314.68,1276.15 320.51,1272.83 326.33,1268.66 332.16,1336.91 337.99,1204.58 344.64,1195.42 350.47,1227.05 356.30,1257.01 362.12,1266.17 367.95,1266.17 372.94,1265.33 378.77,1339.41 385.43,1197.09 390.42,1189.60 396.25,1231.21 402.07,1252.02 407.90,1260.34 413.72,1257.01 419.55,1257.01 425.38,1337.74 431.20,1194.59 437.03,1187.93 442.85,1222.89 448.68,1246.19 454.51,1257.01 460.81,1257.01 466.63,1250.35 472.46,1327.76 478.29,1187.93 484.11,1181.27 489.94,1220.39 495.76,1242.03 501.59,1250.35 507.42,1251.19 513.24,1258.68 519.07,1279.48 524.89,1187.10 530.72,1175.45 536.55,1218.73 542.37,1241.20 548.20,1247.02 554.02,1247.02 559.85,1257.01 566.51,1241.20 571.50,1181.27 577.33,1175.45 583.15,1217.06 589.81,1239.53 595.64,1247.86 600.63,1243.69 606.46,1247.86 613.12,1235.37 618.11,1175.45 624.77,1172.12 630.60,1220.39 636.42,1237.04 642.25,1242.03 648.07,1237.04 653.90,1212.90 660.56,1195.42 665.55,1172.12 671.38,1173.78 677.20,1219.56 683.03,1236.20 688.86,1240.37 694.68,1237.04 700.51,1204.58 706.33,1184.60 712.16,1172.12 717.99,1181.27 723.81,1219.56 729.64,1236.20 735.46,1236.20 741.29,1234.54 747.12,1226.22 752.94,1181.27 758.77,1165.46 764.59,1175.45 770.42,1217.06 776.25,1232.88 782.07,1232.88 787.90,1234.54 793.72,1217.89 799.55,1172.95 805.38,1165.46 811.20,1192.93 817.03,1222.06 822.85,1232.88 828.68,1231.21 834.51,1228.71 840.81,1252.85 846.63,1172.12 852.46,1159.63 858.29,1196.25 864.11,1224.55 869.94,1231.21 875.76,1234.54 881.59,1228.71 887.42,1227.05 893.24,1219.56 899.07,1162.96 904.89,1157.97 910.72,1204.58 916.55,1221.22 923.20,1227.05 929.03,1225.38 934.86,1219.56 940.68,1204.58 945.68,1159.63 951.50,1154.64 957.33,1204.58 963.15,1221.22 968.98,1227.05 975.64,1227.05 980.63,1188.76 986.46,1169.62 993.12,1162.96 998.94,1166.29 1004.77,1208.74 1010.60,1217.89 1016.42,1227.05 1022.25,1225.38 1028.07,1204.58 1033.90,1159.63 1039.73,1154.64 1045.55,1173.78 1051.38,1209.57 1057.20,1222.06 1063.03,1222.06 1068.86,1220.39 1074.68,1237.04 1080.51,1157.97 1086.33,1150.48 1092.16,1172.95 1097.99,1206.24 1103.81,1218.73 1109.64,1218.73 1115.46,1222.06 1121.29,1261.17 1127.12,1167.96 1132.94,1150.48 1138.77,1172.95 1144.59,1210.40 1150.42,1222.89 1156.25,1218.73 1161.24,1218.73 1167.90,1275.32 1173.72,1162.13 1179.55,1153.81 1185.38,1176.28 1191.20,1210.40 1197.03,1219.56 1202.85,1225.38 1208.68,1222.89 1214.51,1288.64 1220.81,1154.64 1226.63,1149.65 1232.46,1179.61 1238.29,1210.40 1244.11,1222.06 1249.94,1222.06 1256.60,1219.56 1261.59,1304.45 1267.42,1156.30 1273.24,1152.98 1279.07,1190.43 1284.89,1212.90 1290.72,1225.38 1296.55,1219.56 1302.37,1212.90 1308.20,1259.51 1314.02,1147.15 1320.68,1143.82 1326.51,1196.25 1331.50,1214.56 1337.33,1220.39 1343.15,1222.06 1349.81,1222.06 1355.64,1259.51 1360.63,1157.97 1367.29,1149.65 1373.12,1191.26 1378.11,1211.24 1383.94,1219.56 1390.60,1220.39 1396.42,1232.88 1402.25,1227.88 1408.07,1156.30 1413.90,1148.81 1419.73,1193.76 1425.55,1210.40 1431.38,1220.39 1437.20,1221.22 1443.03,1228.71 1448.86,1194.59 1454.68,1156.30 1460.51,1148.81 1466.33,1194.59 1472.16,1214.56 1477.99,1222.06 1483.81,1222.06 1489.64,1197.09 1495.46,1185.43 1501.29,1149.65 1507.95,1149.65 1512.94,1199.58 1518.77,1216.23 1524.59,1220.39 1530.42,1218.73 1536.25,1189.60 1541.24,1163.79 1547.90,1150.48 1553.72,1154.64 1559.55,1199.58 1565.38,1214.56 1571.20,1218.73 1577.03,1217.06 1582.85,1202.08 1588.68,1158.80 1594.51,1147.15 1600.81,1167.12 1606.63,1204.58 1612.46,1215.40 1618.29,1218.73 1624.11,1217.06 1629.94,1228.71 1635.76,1164.63 1641.59,1147.15 1647.42,1164.63 1653.24,1204.58 1659.07,1212.90 1664.89,1216.23 1670.72,1217.89 1676.55,1227.05 1682.37,1149.65 1689.03,1148.81 1699.85,1208.74 1705.68,1215.40 1711.50,1215.40 1717.33,1217.06 1723.15,1259.51 1728.98,1153.81 1734.81,1143.82 1746.46,1204.58 1752.28,1214.56 1758.11,1217.06 1763.94,1215.40 1769.76,1273.66 1775.59,1155.47 1781.41,1147.15 1787.24,1176.28 1793.07,1207.91 1798.89,1220.39 1804.72,1218.73 1810.55,1217.89 1817.20,1306.12 1823.03,1154.64 1828.86,1148.81 1834.68,1183.77 1840.51,1209.57 1846.33,1217.89 1857.99,1217.89 1863.81,1292.80 1869.64,1157.97 1875.46,1148.81 1881.29,1187.93 1887.12,1206.24 1892.94,1217.89 1904.59,1207.07 1910.42,1252.02 1916.25,1157.14 1922.07,1147.15 1927.90,1187.10 1933.72,1206.24 1939.55,1215.40 1945.38,1216.23 1951.20,1225.38 1957.03,1217.89 1962.85,1148.81 1969.51,1143.82 1974.51,1192.93 1980.81,1210.40 1986.63,1212.07 1998.29,1218.73 2004.11,1202.08 2009.94,1148.81 2016.60,1142.16 2021.59,1190.43 2027.42,1212.90 2033.24,1212.90 2039.90,1216.23 2044.89,1179.61 2050.72,1169.62 2057.38,1150.48 2063.20,1152.98 2068.20,1197.09 2074.02,1210.40 2080.68,1218.73 2086.51,1217.06 2092.33,1184.60 2097.33,1159.63 2103.15,1148.81 2109.81,1158.80 2115.64,1200.42 2120.63,1216.23 2132.28,1216.23 2138.94,1205.41 2143.94,1147.15 2150.60,1148.81 2156.42,1166.29 2162.25,1203.74 2168.07,1216.23 2173.90,1216.23 2179.73,1212.90 2185.55,1233.71 2191.38,1154.64 2197.20,1152.98 2203.03,1163.79 2208.86,1200.42 2214.68,1216.23 2220.51,1216.23 2226.33,1212.90 2232.16,1255.35 2237.99,1157.14 2243.81,1149.65 2250.47,1175.45 2256.30,1204.58 2262.12,1212.90 2267.95,1212.07 2272.94,1210.40 2277.94,1268.66 2284.59,1268.66 2290.42,1152.98 2296.25,1152.98 2302.07,1171.29 2307.90,1215.40 2313.72,1216.23 2319.55,1218.73 2324.54,1291.97 2331.20,1291.97 2337.72,1153.14 2342.36,1174.82 2348.56,1194.96 2354.75,1207.35 2360.95,1218.19 2365.60,1220.51" fill="none" stroke="#ec0c0c" stroke-width="3.1" stroke-linejoin="round" stroke-linecap="round" clip-path="url(#c1035)"/>
<path d="M44.15,1070.70 L44.15,1085.70 M40.55,1082.50 L44.15,1086.30 L47.75,1082.50" fill="none" stroke="#000" stroke-width="1.3"/>
<text transform="translate(56.50,1086.70) scale(1,1.1)" class="st" textLength="44.60" lengthAdjust="spacingAndGlyphs" fill="#dd1010">70,5</text>
<text transform="translate(132.00,1086.70) scale(1,1.1)" class="st" textLength="16.60" lengthAdjust="spacingAndGlyphs" fill="#000">Ø</text>
<text transform="translate(157.80,1086.70) scale(1,1.1)" class="st" textLength="55.60" lengthAdjust="spacingAndGlyphs" fill="#dd1010">79,28</text>
<path d="M249.50,1086.70 L249.50,1071.70 M245.90,1074.90 L249.50,1071.10 L253.10,1074.90" fill="none" stroke="#000" stroke-width="1.3"/>
<text transform="translate(262.30,1086.70) scale(1,1.1)" class="st" textLength="44.50" lengthAdjust="spacingAndGlyphs" fill="#dd1010">83,9</text>
<rect x="2100.20" y="1062.20" width="7.5" height="29.4" fill="#ff0000"/>
<text x="2115.40" y="1086.90" class="lg" textLength="247.90" lengthAdjust="spacingAndGlyphs">CPU (Tctl/Tdie) [Â°C]</text>
<path d="M0,1485 L0,1476 A9,9 0 0 0 9,1485 Z" fill="#c8c8c8"/>
<path d="M2403,1485 L2403,1476 A9,9 0 0 1 2394,1485 Z" fill="#c8c8c8"/>
<rect x="0" y="9" width="1.2" height="1467" fill="#a4a4a4"/>
</svg></body></html>
